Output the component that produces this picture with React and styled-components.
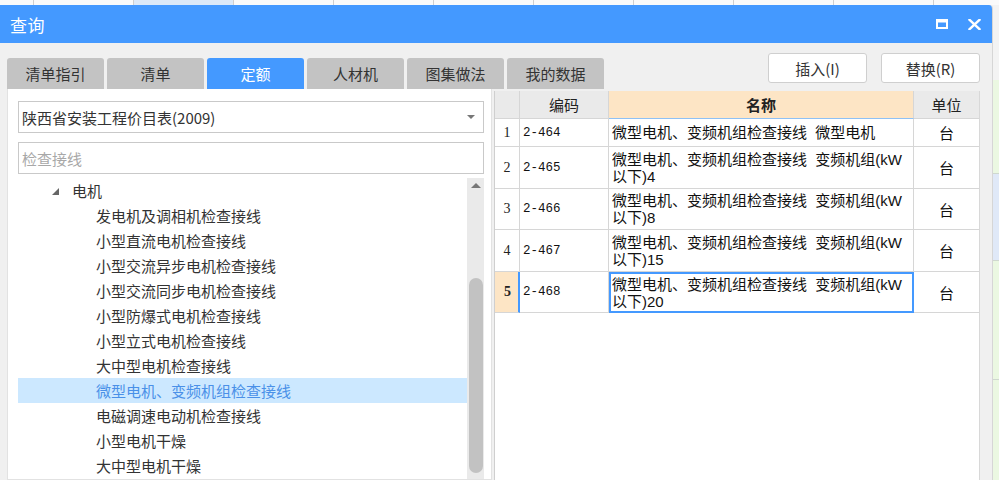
import React from 'react';
import styled, { createGlobalStyle } from 'styled-components';

const GlobalStyle = createGlobalStyle`
  html, body { margin: 0; padding: 0; }
  body {
    width: 999px;
    height: 480px;
    overflow: hidden;
    background: #f0f0f0;
    font-family: "Noto Sans CJK SC", "Noto Sans", sans-serif;
  }
  * { box-sizing: border-box; }
`;

const Page = styled.div`
  width: 999px;
  height: 480px;
  display: flex;
  flex-direction: column;
  overflow: hidden;
`;

const BackStrip = styled.div`
  height: 5px;
  flex: none;
  display: flex;
  background: #fafafa;
  padding-left: 33px;
`;

const BackTab = styled.div`
  width: 100px;
  flex: none;
  border-left: 1px solid #cfcfcf;
  background: ${p => (p.$active ? '#dce9f8' : '#fafafa')};
`;

const Stage = styled.div`
  flex: 1;
  display: flex;
  min-height: 0;
`;

const Dialog = styled.div`
  width: 993px;
  flex: none;
  display: flex;
  flex-direction: column;
  background: #f0f0f0;
  border-top-right-radius: 4px;
  overflow: hidden;
  border-right: 1px solid #d6d6d6;
`;

const SideStrip = styled.div`
  flex: 1;
  display: flex;
  flex-direction: column;
  background: #f3f3f3;
`;

const SideBlock = styled.div`
  height: ${p => p.$h}px;
  flex: none;
  background: ${p => p.$bg};
  border-top: ${p => (p.$line ? '1px solid #cfd8cf' : 'none')};
`;

const TitleBar = styled.div`
  height: 38px;
  flex: none;
  background: #4499ff;
  display: flex;
  align-items: center;
  padding: 0 11px 0 10px;
  color: #fff;
  font-size: 17px;
`;

const Title = styled.div`
  flex: 1;
  letter-spacing: 0.5px;
`;

const TitleIcons = styled.div`
  display: flex;
  align-items: center;
  gap: 20px;
`;

const Body = styled.div`
  flex: 1;
  display: flex;
  flex-direction: column;
  padding: 0 12px 0 7px;
  min-height: 0;
`;

const TopRow = styled.div`
  height: 46px;
  flex: none;
  display: flex;
  justify-content: space-between;
`;

const Tabs = styled.div`
  display: flex;
  gap: 3px;
  align-self: flex-end;
`;

const Tab = styled.div`
  width: 97px;
  height: 31px;
  border-radius: 3px 3px 0 0;
  background: ${p => (p.$active ? '#4499ff' : '#c3c3c3')};
  color: ${p => (p.$active ? '#fff' : '#333')};
  font-size: 15px;
  display: flex;
  align-items: center;
  justify-content: center;
`;

const Buttons = styled.div`
  display: flex;
  gap: 14px;
  margin-top: 10px;
  align-self: flex-start;
`;

const Button = styled.div`
  width: 99px;
  height: 30px;
  background: #fff;
  border: 1px solid #cfcfcf;
  border-radius: 3px;
  font-size: 15px;
  color: #333;
  display: flex;
  align-items: center;
  justify-content: center;
`;

const Main = styled.div`
  flex: 1;
  display: flex;
  gap: 2px;
  min-height: 0;
`;

const LeftPanel = styled.div`
  width: 485px;
  flex: none;
  background: #fff;
  border: 1px solid #e2e2e2;
  border-top: none;
  padding: 12px 7px 0 10px;
  display: flex;
  flex-direction: column;
  overflow: hidden;
`;

const SelectBox = styled.div`
  height: 32px;
  flex: none;
  border: 1px solid #c9c9c9;
  display: flex;
  align-items: center;
  padding: 0 8px 0 3px;
  font-size: 15px;
  color: #333;
`;

const SelectText = styled.div`
  flex: 1;
`;

const Caret = styled.div`
  width: 0;
  height: 0;
  border-left: 4px solid transparent;
  border-right: 4px solid transparent;
  border-top: 4px solid #777;
`;

const SearchBox = styled.div`
  height: 32px;
  flex: none;
  margin-top: 9px;
  border: 1px solid #c9c9c9;
  display: flex;
  align-items: center;
  padding: 0 3px;
  font-size: 15px;
  color: #a8a8a8;
`;

const Tree = styled.div`
  flex: 1;
  display: flex;
  margin-top: 4px;
  min-height: 0;
`;

const TreeList = styled.div`
  flex: 1;
  overflow: hidden;
`;

const TreeRow = styled.div`
  height: 25px;
  display: flex;
  align-items: center;
  padding-left: ${p => (p.$level === 0 ? 34 : 78)}px;
  font-size: 15px;
  white-space: nowrap;
  color: ${p => (p.$selected ? '#4a90e8' : '#333')};
  background: ${p => (p.$selected ? '#cce8ff' : 'transparent')};
`;

const Expander = styled.div`
  width: 0;
  height: 0;
  border-left: 7px solid transparent;
  border-bottom: 7px solid #666;
  margin-right: 13px;
  margin-top: 1px;
`;

const ScrollBar = styled.div`
  width: 17px;
  flex: none;
  background: #eaeaea;
  display: flex;
  flex-direction: column;
  align-items: center;
`;

const ScrollArrow = styled.div`
  margin-top: 5px;
  width: 0;
  height: 0;
  border-left: 5px solid transparent;
  border-right: 5px solid transparent;
  border-bottom: 5px solid #777;
`;

const Thumb = styled.div`
  width: 14px;
  border-radius: 7px;
  background: #c2c2c2;
`;

const TableWrap = styled.div`
  flex: 1;
  margin-top: 2px;
  background: #fff;
  border-left: 1px solid #cfcfcf;
  border-right: 1px solid #d8d8d8;
  overflow: hidden;
`;

const Grid = styled.div`
  display: grid;
  grid-template-columns: 25px 89px 305px 66px;
`;

const HeadCell = styled.div`
  height: 28px;
  background: ${p => (p.$accent ? '#fde5c5' : '#eaeaea')};
  border-right: 1px solid #d6d6d6;
  border-bottom: 1px solid ${p => (p.$accent ? '#8fc1f5' : '#d6d6d6')};
  display: flex;
  align-items: center;
  justify-content: center;
  font-size: 15px;
  font-weight: ${p => (p.$accent ? 700 : 400)};
  color: #222;
`;

const NumCell = styled.div`
  min-height: ${p => p.$h}px;
  background: ${p => (p.$current ? '#fde5c5' : '#fff')};
  border-right: ${p => (p.$current ? '2px solid #4499ff' : '1px solid #d6d6d6')};
  border-bottom: 1px solid #d6d6d6;
  display: flex;
  align-items: center;
  justify-content: center;
  font-family: "Liberation Serif", serif;
  font-size: 14px;
  font-weight: ${p => (p.$current ? 700 : 400)};
  color: #222;
  padding-left: ${p => (p.$current ? 2 : 0)}px;
`;

const CodeCell = styled.div`
  border-right: 1px solid #d6d6d6;
  border-bottom: 1px solid #d6d6d6;
  display: flex;
  align-items: center;
  padding-left: 3px;
  font-family: "Liberation Mono", monospace;
  font-size: 12.5px;
  color: #111;
`;

const NameCell = styled.div`
  border: ${p => (p.$focused ? '2px solid #4499ff' : 'none')};
  border-right: ${p => (p.$focused ? '2px solid #4499ff' : '1px solid #d6d6d6')};
  border-bottom: ${p => (p.$focused ? '2px solid #4499ff' : '1px solid #d6d6d6')};
  display: flex;
  flex-direction: column;
  justify-content: center;
  padding-left: ${p => (p.$focused ? 1 : 3)}px;
  font-family: "Liberation Sans", "Noto Sans CJK SC", sans-serif;
  font-size: 15px;
  line-height: 17px;
  color: #111;
`;

const NameLine = styled.div`
  white-space: pre;
`;

const UnitCell = styled.div`
  border-right: 1px solid #d6d6d6;
  border-bottom: 1px solid #d6d6d6;
  display: flex;
  align-items: center;
  justify-content: center;
  font-size: 15px;
  color: #111;
`;

const treeItems = [
  { level: 0, text: '电机' },
  { level: 1, text: '发电机及调相机检查接线' },
  { level: 1, text: '小型直流电机检查接线' },
  { level: 1, text: '小型交流异步电机检查接线' },
  { level: 1, text: '小型交流同步电机检查接线' },
  { level: 1, text: '小型防爆式电机检查接线' },
  { level: 1, text: '小型立式电机检查接线' },
  { level: 1, text: '大中型电机检查接线' },
  { level: 1, text: '微型电机、变频机组检查接线', selected: true },
  { level: 1, text: '电磁调速电动机检查接线' },
  { level: 1, text: '小型电机干燥' },
  { level: 1, text: '大中型电机干燥' },
];

const rows = [
  { n: 1, code: '2-464', name: ['微型电机、变频机组检查接线  微型电机'], h: 28 },
  { n: 2, code: '2-465', name: ['微型电机、变频机组检查接线  变频机组(kW', '以下)4'], h: 42 },
  { n: 3, code: '2-466', name: ['微型电机、变频机组检查接线  变频机组(kW', '以下)8'], h: 41 },
  { n: 4, code: '2-467', name: ['微型电机、变频机组检查接线  变频机组(kW', '以下)15'], h: 42 },
  { n: 5, code: '2-468', name: ['微型电机、变频机组检查接线  变频机组(kW', '以下)20'], h: 41, current: true },
];

const tabs = ['清单指引', '清单', '定额', '人材机', '图集做法', '我的数据'];

function MaximizeIcon() {
  return (
    <svg width="12" height="10" viewBox="0 0 12 10">
      <path fillRule="evenodd" fill="#fff" d="M0 0H12V10H0Z M2 3.5H10V8H2Z" />
    </svg>
  );
}

function CloseIcon() {
  return (
    <svg width="13" height="11" viewBox="0 0 13 11">
      <path d="M1.5 0.8L11.5 10.2M11.5 0.8L1.5 10.2" stroke="#fff" strokeWidth="2.4" strokeLinecap="square" />
    </svg>
  );
}

export default function App() {
  return (
    <Page>
      <GlobalStyle />
      <BackStrip>
        {[0, 1, 2, 3, 4, 5, 6, 7, 8, 9].map(i => (
          <BackTab key={i} $active={i === 1} />
        ))}
      </BackStrip>
      <Stage>
        <Dialog>
          <TitleBar>
            <Title>查询</Title>
            <TitleIcons>
              <MaximizeIcon />
              <CloseIcon />
            </TitleIcons>
          </TitleBar>
          <Body>
            <TopRow>
              <Tabs>
                {tabs.map(t => (
                  <Tab key={t} $active={t === '定额'}>{t}</Tab>
                ))}
              </Tabs>
              <Buttons>
                <Button>插入(I)</Button>
                <Button>替换(R)</Button>
              </Buttons>
            </TopRow>
            <Main>
              <LeftPanel>
                <SelectBox>
                  <SelectText>陕西省安装工程价目表(2009)</SelectText>
                  <Caret />
                </SelectBox>
                <SearchBox>检查接线</SearchBox>
                <Tree>
                  <TreeList>
                    {treeItems.map(item => (
                      <TreeRow key={item.text} $level={item.level} $selected={item.selected}>
                        {item.level === 0 && <Expander />}
                        {item.text}
                      </TreeRow>
                    ))}
                  </TreeList>
                  <ScrollBar>
                    <ScrollArrow />
                    <Thumb style={{ marginTop: 90, height: 195 }} />
                  </ScrollBar>
                </Tree>
              </LeftPanel>
              <TableWrap>
                <Grid>
                  <HeadCell />
                  <HeadCell>编码</HeadCell>
                  <HeadCell $accent>名称</HeadCell>
                  <HeadCell>单位</HeadCell>
                  {rows.map(r => (
                    <React.Fragment key={r.n}>
                      <NumCell $h={r.h} $current={r.current}>{r.n}</NumCell>
                      <CodeCell>{r.code}</CodeCell>
                      <NameCell $focused={r.current}>
                        {r.name.map(l => (
                          <NameLine key={l}>{l}</NameLine>
                        ))}
                      </NameCell>
                      <UnitCell>台</UnitCell>
                    </React.Fragment>
                  ))}
                </Grid>
              </TableWrap>
            </Main>
          </Body>
        </Dialog>
        <SideStrip>
          <SideBlock $h={75} $bg="#f3f3f3" />
          <SideBlock $h={93} $bg="#ebf8e2" />
          <SideBlock $h={87} $bg="#e0e9f8" $line />
          <SideBlock $h={119} $bg="#ebf8e2" $line />
          <SideBlock $h={120} $bg="#ebf8e2" $line />
        </SideStrip>
      </Stage>
    </Page>
  );
}
